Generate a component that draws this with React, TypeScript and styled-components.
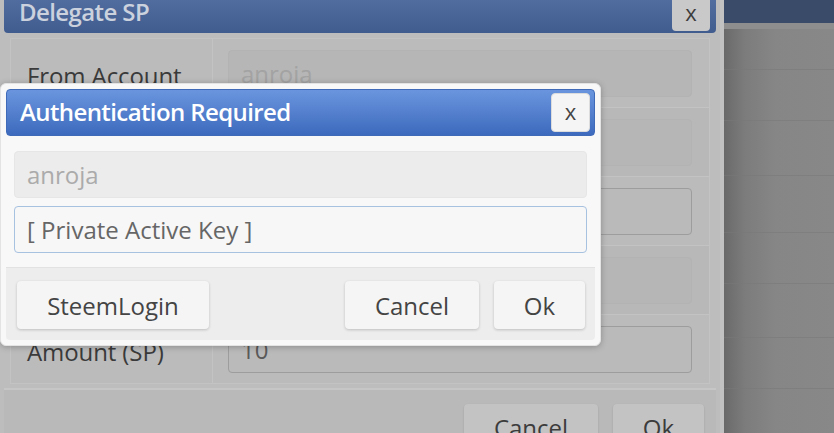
import React from "react";
import styled, { createGlobalStyle } from "styled-components";

const Global = createGlobalStyle`
  html, body { margin: 0; padding: 0; }
  body {
    width: 834px;
    height: 433px;
    overflow: hidden;
    font-family: "Open Sans", "Noto Sans", sans-serif;
  }
`;

const Screen = styled.div`
  position: relative;
  width: 834px;
  height: 433px;
  overflow: hidden;
  background: #878787;
`;

/* underlying page, dimmed */
const Page = styled.div`
  display: flex;
  flex-direction: column;
  width: 100%;
  height: 100%;
  background: linear-gradient(to right, #5e5e5e 716px, #6a6a6a 724px, #7c7c7c 745px, #868686 775px, #888 834px);
`;

const PageBar = styled.div`
  height: 23px;
  flex: none;
  background: #3a4a69;
  border-bottom: 6px solid #8e8e8e;
`;

const PageRow = styled.div<{ $h: number }>`
  height: ${(p) => p.$h}px;
  flex: none;
  border-bottom: 1px solid rgba(120, 120, 120, 0.55);
`;

/* back dialog */
const BackDialog = styled.div`
  position: absolute;
  left: 0;
  top: -19px;
  width: 712px;
  padding: 5px 4px 0 4px;
  display: flex;
  flex-direction: column;
  background: #bdbdbd;
  border-right: 4px solid #c2c2c2;
  height: 460px;
`;

const BackHeader = styled.div`
  height: 47px;
  flex: none;
  display: flex;
  align-items: center;
  justify-content: space-between;
  padding: 0 6px 0 15px;
  border-radius: 4px;
  background: linear-gradient(#5873a6, #405c8f);
`;

const BackTitle = styled.div`
  color: #cbd2de;
  font-size: 24px;
  font-weight: 600;
  letter-spacing: -0.6px;
  padding-top: 3px;
`;

const BackClose = styled.div`
  width: 38px;
  height: 38px;
  margin-top: 4px;
  border-radius: 4px;
  background: #c9c9c9;
  color: #3c3c3c;
  font-size: 22px;
  display: flex;
  align-items: center;
  justify-content: center;
`;

const BackBody = styled.div`
  display: flex;
  flex-direction: column;
  padding: 5px 6px 4px 6px;
  border-bottom: 2px solid #c6c6c6;
`;

const BackRow = styled.div<{ $alt?: boolean }>`
  display: grid;
  grid-template-columns: 202px 1fr;
  height: 68px;
  border: 1px solid #c3c3c3;
  border-top: none;
  background: ${(p) => (p.$alt ? "#b8b8b8" : "#bbbbbb")};
  &:first-child { border-top: 1px solid #c3c3c3; }
`;

const BackLabel = styled.div`
  display: flex;
  align-items: center;
  padding: 4px 0 0 16px;
  border-right: 1px solid #c3c3c3;
  color: #3a3a3a;
  font-size: 24px;
  letter-spacing: -0.1px;
`;

const BackCell = styled.div`
  display: flex;
  align-items: center;
  padding: 0 17px 0 15px;
`;

const BackInput = styled.div<{ $editable?: boolean }>`
  flex: 1;
  height: 47px;
  box-sizing: border-box;
  border-radius: 4px;
  display: flex;
  align-items: center;
  padding-left: 12px;
  font-size: 24px;
  color: ${(p) => (p.$editable ? "#5a5a5a" : "#a3a3a3")};
  background: ${(p) => (p.$editable ? "#bababa" : "#b6b6b6")};
  border: 1px solid ${(p) => (p.$editable ? "#9d9d9d" : "#b3b3b3")};
`;

const BackFooter = styled.div`
  display: flex;
  justify-content: flex-end;
  gap: 15px;
  padding: 14px 12px 0 0;
  background: #b9b9b9;
  flex: 1;
`;

const BackButton = styled.div<{ $w: number }>`
  width: ${(p) => p.$w}px;
  height: 47px;
  border-radius: 4px;
  background: #c3c3c3;
  color: #3c3c3c;
  font-size: 24px;
  display: flex;
  align-items: center;
  justify-content: center;
  box-shadow: 0 1px 2px rgba(0, 0, 0, 0.15);
`;

/* front dialog */
const Dialog = styled.div`
  position: absolute;
  left: 0;
  top: 83px;
  width: 601px;
  box-sizing: border-box;
  padding: 5px;
  background: #f8f8f8;
  border-radius: 6px;
  border: 1px solid #e3e3e3;
  box-shadow: 0 1px 6px rgba(0, 0, 0, 0.25);
  display: flex;
  flex-direction: column;
`;

const Header = styled.div`
  height: 47px;
  box-sizing: border-box;
  display: flex;
  align-items: center;
  justify-content: space-between;
  padding: 0 4px 0 13px;
  border-radius: 4px;
  border: 1px solid #3f6ab8;
  background: linear-gradient(#6a95de, #3d6abd);
`;

const Title = styled.div`
  color: #ffffff;
  font-size: 24px;
  font-weight: 600;
  letter-spacing: -0.6px;
  padding-bottom: 2px;
`;

const Close = styled.div`
  width: 39px;
  height: 39px;
  box-sizing: border-box;
  border-radius: 4px;
  background: #f5f5f5;
  border: 1px solid #dcdcdc;
  color: #444;
  font-size: 22px;
  display: flex;
  align-items: center;
  justify-content: center;
  padding-bottom: 3px;
`;

const Body = styled.div`
  display: flex;
  flex-direction: column;
  gap: 8px;
  padding: 15px 8px 14px 8px;
`;

const Field = styled.div<{ $focus?: boolean }>`
  height: 47px;
  box-sizing: border-box;
  border-radius: 4px;
  display: flex;
  align-items: center;
  padding-left: 12px;
  font-size: 24px;
  color: ${(p) => (p.$focus ? "#666" : "#ababab")};
  background: ${(p) => (p.$focus ? "#f7f7f7" : "#ececec")};
  border: 1px solid ${(p) => (p.$focus ? "#a7c1e1" : "#e6e6e6")};
`;

const Footer = styled.div`
  display: flex;
  align-items: center;
  gap: 15px;
  padding: 13px 10px 11px 11px;
  background: #ededed;
  border-top: 1px solid #e2e2e2;
  border-radius: 0 0 4px 4px;
`;

const Spacer = styled.div`
  flex: 1;
`;

const Button = styled.div<{ $w: number }>`
  width: ${(p) => p.$w}px;
  height: 48px;
  border-radius: 4px;
  background: #f5f5f5;
  color: #444;
  font-size: 24px;
  display: flex;
  align-items: center;
  justify-content: center;
  box-shadow: 0 1px 3px rgba(0, 0, 0, 0.2);
`;

export default function App() {
  return (
    <Screen>
      <Global />
      <Page>
        <PageBar />
        <PageRow $h={40} />
        <PageRow $h={50} />
        <PageRow $h={54} />
        <PageRow $h={56} />
        <PageRow $h={50} />
        <PageRow $h={53} />
        <PageRow $h={50} />
      </Page>

      <BackDialog>
        <BackHeader>
          <BackTitle>Delegate SP</BackTitle>
          <BackClose>x</BackClose>
        </BackHeader>
        <BackBody>
          <BackRow>
            <BackLabel>From Account</BackLabel>
            <BackCell>
              <BackInput>anroja</BackInput>
            </BackCell>
          </BackRow>
          <BackRow $alt>
            <BackLabel>To Account</BackLabel>
            <BackCell>
              <BackInput />
            </BackCell>
          </BackRow>
          <BackRow>
            <BackLabel>Delegatee</BackLabel>
            <BackCell>
              <BackInput $editable />
            </BackCell>
          </BackRow>
          <BackRow $alt>
            <BackLabel>Current</BackLabel>
            <BackCell>
              <BackInput />
            </BackCell>
          </BackRow>
          <BackRow>
            <BackLabel>Amount (SP)</BackLabel>
            <BackCell>
              <BackInput $editable>10</BackInput>
            </BackCell>
          </BackRow>
        </BackBody>
        <BackFooter>
          <BackButton $w={134}>Cancel</BackButton>
          <BackButton $w={91}>Ok</BackButton>
        </BackFooter>
      </BackDialog>

      <Dialog>
        <Header>
          <Title>Authentication Required</Title>
          <Close>x</Close>
        </Header>
        <Body>
          <Field>anroja</Field>
          <Field $focus>[ Private Active Key ]</Field>
        </Body>
        <Footer>
          <Button $w={192}>SteemLogin</Button>
          <Spacer />
          <Button $w={134}>Cancel</Button>
          <Button $w={91}>Ok</Button>
        </Footer>
      </Dialog>
    </Screen>
  );
}
